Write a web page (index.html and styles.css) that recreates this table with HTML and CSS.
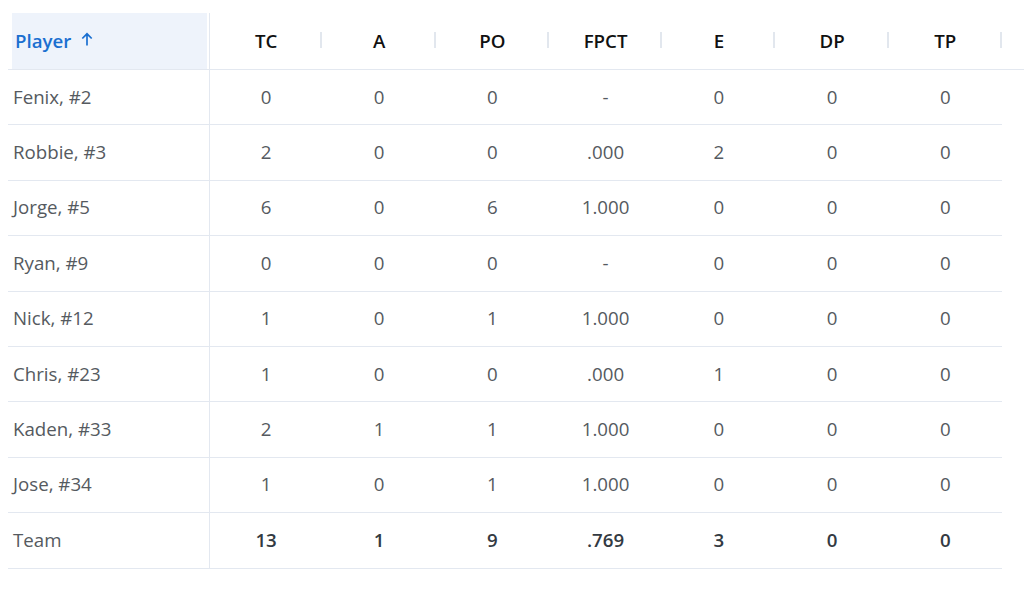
FILE: index.html
```html
<!DOCTYPE html>
<html>
<head>
<meta charset="utf-8">
<link rel="stylesheet" href="styles.css">
</head>
<body>
<table class="stats">
  <colgroup>
    <col class="c-player">
    <col class="c-stat"><col class="c-stat"><col class="c-stat"><col class="c-stat"><col class="c-stat"><col class="c-stat"><col class="c-stat">
    <col class="c-fill">
  </colgroup>
  <thead>
    <tr>
      <th class="player-h"><div class="sorted">Player <svg class="arrow" width="12" height="14" viewBox="0 0 12 14"><path d="M6 13.5V1.8M1.3 6.5L6 1.8 10.7 6.5" fill="none" stroke="currentColor" stroke-width="1.7"/></svg></div></th>
      <th class="sep">TC</th>
      <th class="sep">A</th>
      <th class="sep">PO</th>
      <th class="sep">FPCT</th>
      <th class="sep">E</th>
      <th class="sep">DP</th>
      <th class="sep">TP</th>
      <th class="filler"></th>
    </tr>
  </thead>
  <tbody>
    <tr><td>Fenix, #2</td><td>0</td><td>0</td><td>0</td><td>-</td><td>0</td><td>0</td><td>0</td><td class="filler"></td></tr>
    <tr><td>Robbie, #3</td><td>2</td><td>0</td><td>0</td><td>.000</td><td>2</td><td>0</td><td>0</td><td class="filler"></td></tr>
    <tr><td>Jorge, #5</td><td>6</td><td>0</td><td>6</td><td>1.000</td><td>0</td><td>0</td><td>0</td><td class="filler"></td></tr>
    <tr><td>Ryan, #9</td><td>0</td><td>0</td><td>0</td><td>-</td><td>0</td><td>0</td><td>0</td><td class="filler"></td></tr>
    <tr><td>Nick, #12</td><td>1</td><td>0</td><td>1</td><td>1.000</td><td>0</td><td>0</td><td>0</td><td class="filler"></td></tr>
    <tr><td>Chris, #23</td><td>1</td><td>0</td><td>0</td><td>.000</td><td>1</td><td>0</td><td>0</td><td class="filler"></td></tr>
    <tr><td>Kaden, #33</td><td>2</td><td>1</td><td>1</td><td>1.000</td><td>0</td><td>0</td><td>0</td><td class="filler"></td></tr>
    <tr><td>Jose, #34</td><td>1</td><td>0</td><td>1</td><td>1.000</td><td>0</td><td>0</td><td>0</td><td class="filler"></td></tr>
    <tr class="team"><td>Team</td><td>13</td><td>1</td><td>9</td><td>.769</td><td>3</td><td>0</td><td>0</td><td class="filler"></td></tr>
  </tbody>
</table>
</body>
</html>
```
FILE: styles.css
```css
html, body {
  margin: 0;
  padding: 0;
  background: #ffffff;
}
body {
  padding: 13px 0 0 8px;
  font-family: "Open Sans", "Noto Sans", sans-serif;
}
.stats {
  border-collapse: collapse;
  table-layout: fixed;
  width: 1016px;
}
.c-player { width: 201px; }
.c-stat { width: 113.14px; }
.c-fill { width: 22px; }
.stats th, .stats td {
  padding: 0;
  text-align: center;
  font-size: 18.7px;
}
.stats th {
  height: 54px;
  padding-bottom: 2px;
  font-weight: 600;
  color: #111111;
  border-bottom: 1px solid #e3e8f0;
  position: relative;
}
.stats td {
  height: 52.4px;
  padding-bottom: 2px;
  color: #555a60;
  border-bottom: 1px solid #e3e8f0;
}
.stats th:first-child, .stats td:first-child {
  text-align: left;
  border-right: 1px solid #e3e8f0;
}
.stats td:first-child {
  padding-left: 5px;
}
.stats td.filler {
  border-bottom: none;
}
.stats .player-h {
  padding: 0 2px 0 4px;
}
.sorted {
  height: 56px;
  background: #eef3fb;
  color: #1a6fd0;
  font-weight: 600;
  display: flex;
  align-items: center;
  gap: 10px;
  padding-left: 3px;
  padding-bottom: 2px;
  box-sizing: border-box;
}
.arrow {
  display: block;
  margin-top: -2px;
}
.sep::after {
  content: "";
  position: absolute;
  right: 0;
  top: 19px;
  width: 2px;
  height: 16px;
  background: #e2e7ee;
}
.team td {
  font-weight: 600;
  color: #333a42;
}
.team td:first-child {
  font-weight: 400;
  color: #555a60;
}
```
